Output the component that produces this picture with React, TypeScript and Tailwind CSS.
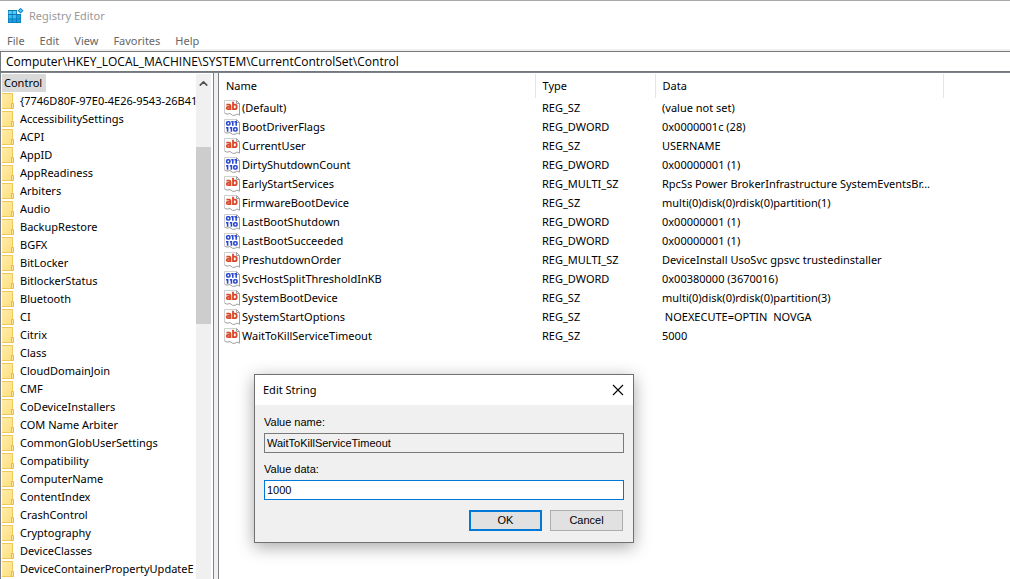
import { ChevronUp } from "lucide-react";

const menuItems = ["File", "Edit", "View", "Favorites", "Help"];

const keys = [
  "{7746D80F-97E0-4E26-9543-26B41",
  "AccessibilitySettings",
  "ACPI",
  "AppID",
  "AppReadiness",
  "Arbiters",
  "Audio",
  "BackupRestore",
  "BGFX",
  "BitLocker",
  "BitlockerStatus",
  "Bluetooth",
  "CI",
  "Citrix",
  "Class",
  "CloudDomainJoin",
  "CMF",
  "CoDeviceInstallers",
  "COM Name Arbiter",
  "CommonGlobUserSettings",
  "Compatibility",
  "ComputerName",
  "ContentIndex",
  "CrashControl",
  "Cryptography",
  "DeviceClasses",
  "DeviceContainerPropertyUpdateE",
];

const values = [
  { name: "(Default)", type: "REG_SZ", data: "(value not set)" },
  { name: "BootDriverFlags", type: "REG_DWORD", data: "0x0000001c (28)" },
  { name: "CurrentUser", type: "REG_SZ", data: "USERNAME" },
  { name: "DirtyShutdownCount", type: "REG_DWORD", data: "0x00000001 (1)" },
  { name: "EarlyStartServices", type: "REG_MULTI_SZ", data: "RpcSs Power BrokerInfrastructure SystemEventsBr..." },
  { name: "FirmwareBootDevice", type: "REG_SZ", data: "multi(0)disk(0)rdisk(0)partition(1)" },
  { name: "LastBootShutdown", type: "REG_DWORD", data: "0x00000001 (1)" },
  { name: "LastBootSucceeded", type: "REG_DWORD", data: "0x00000001 (1)" },
  { name: "PreshutdownOrder", type: "REG_MULTI_SZ", data: "DeviceInstall UsoSvc gpsvc trustedinstaller" },
  { name: "SvcHostSplitThresholdInKB", type: "REG_DWORD", data: "0x00380000 (3670016)" },
  { name: "SystemBootDevice", type: "REG_SZ", data: "multi(0)disk(0)rdisk(0)partition(3)" },
  { name: "SystemStartOptions", type: "REG_SZ", data: " NOEXECUTE=OPTIN  NOVGA" },
  { name: "WaitToKillServiceTimeout", type: "REG_SZ", data: "5000" },
];

const RegistryIcon = () => (
  <svg width="16" height="16" viewBox="0 0 16 16" aria-hidden="true">
    <path d="M0 2h9v4h4v9H0z" fill="#0878b8" />
    <path d="M.6 3h3.2v3H.6zM4.6 3h3.6v3H4.6z" fill="#55cdf8" />
    <path d="M.6 7h3.2v3.4H.6zM4.6 7h3.6v3.4H4.6z" fill="#3dbcf0" />
    <path d="M9 7h3.4v3.4H9zM.6 11.3h3.2v3H.6zM4.6 11.3h3.6v3H4.6zM9 11.3h3.4v3H9z" fill="#1d9fdc" />
    <path d="M12.5 -.2L15.5 2.7L12.5 5.6L9.6 2.7z" fill="#1481bd" />
    <path d="M12.5 1.1L14.1 2.7L12.5 4.3L10.9 2.7z" fill="#55cdf8" />
  </svg>
);

const FolderIcon = () => (
  <svg width="12" height="16" viewBox="0 0 12 16" className="shrink-0" aria-hidden="true">
    <defs>
      <linearGradient id="folder" x1="0" y1="0" x2="1" y2="1">
        <stop offset="0" stopColor="#ffecab" />
        <stop offset="1" stopColor="#fddf7c" />
      </linearGradient>
    </defs>
    <path d="M0 0H11V16H0z" fill="url(#folder)" />
    <path d="M0 .5H10.5V11M0 15.5H9.5" fill="none" stroke="#eec95a" />
    <path d="M9.5 10.5h2v5h-2z" fill="#ffe694" stroke="#e6bc45" />
  </svg>
);

const ValueIcon = ({ binary }: { binary: boolean }) => (
  <svg width="16" height="16" viewBox="0 0 16 16" className="shrink-0" aria-hidden="true">
    <path d="M.5 .5H12.5L15.5 3.5V15L13 14L11 15.3L8.5 15.5L6 13.5L3 14L.5 13z" fill="#fff" />
    <path d="M.5 13V.5H12" fill="none" stroke="#cfcfcf" />
    <path d="M12.5 .5V3.5H15.5L12.5 .5M15.5 3.5V15.2L13 14L11 15.3H8.5L6 13.5L3 14.2L.5 13" fill="none" stroke="#a0a0a0" />
    {binary ? (
      <g fill="none" stroke="#2948d0" strokeWidth="1.6">
        <rect x="2.7" y="2.8" width="3.2" height="3.2" rx="1" />
        <path d="M7.2 2.8H8.8V6.8M10.4 2.8H12.2V6.8" />
        <path d="M2 8.8H3.6V12.8M5.8 8.8H7.4V12.8" />
        <rect x="9.8" y="8.8" width="3.2" height="3.2" rx="1" />
      </g>
    ) : (
      <g fill="none" stroke="#d9482b" strokeWidth="1.8">
        <path d="M2.4 4.6H5.2Q6.4 4.6 6.4 5.7V10.1M6.4 6.8H4Q2.7 6.8 2.7 8T4 9.2H6.4" />
        <path d="M9 1.8V10.1M9 4.7H11.1Q12.7 4.7 12.7 6.9T11.1 9.2H9" />
      </g>
    )}
  </svg>
);

const KeyTree = () => (
  <nav aria-label="Keys" className="flex w-[214px] shrink-0 overflow-hidden border-x border-[#7c8288] bg-white pr-[2px] pl-px">
    <div className="min-w-0 flex-1 overflow-hidden pt-px">
      <button className="block h-[18px] bg-[#d9d9d9] pr-1 pl-[2px] leading-[18px]">Control</button>
      <ul>
        {keys.map((key) => (
          <li key={key}>
            <button className="flex h-[18px] items-center gap-[6px] leading-[18px] whitespace-nowrap">
              <FolderIcon />
              {key}
            </button>
          </li>
        ))}
      </ul>
    </div>
    <div className="mt-px flex w-[15px] shrink-0 flex-col bg-[#f0f0f0]">
      <button aria-label="Scroll up" className="flex h-[18px] items-center justify-center text-[#505050]">
        <ChevronUp size={13} strokeWidth={3} />
      </button>
      <div className="mt-[55px] h-[177px] bg-[#cdcdcd]" />
    </div>
  </nav>
);

const ValueList = () => (
  <main className="min-w-0 flex-1 overflow-hidden border-l border-[#7c8288] bg-white pt-px">
    <table className="w-full table-fixed border-collapse text-left">
      <colgroup>
        <col className="w-[316px]" />
        <col className="w-[120px]" />
        <col className="w-[288px]" />
        <col />
      </colgroup>
      <thead>
        <tr className="h-[24px]">
          <th className="border-r border-[#e5e5e5] p-0 pl-[7px] font-normal">Name</th>
          <th className="border-r border-[#e5e5e5] p-0 pl-[7px] font-normal">Type</th>
          <th className="border-r border-[#e5e5e5] p-0 pl-[7px] font-normal">Data</th>
          <td />
        </tr>
      </thead>
      <tbody>
        {values.map((value) => (
          <tr key={value.name} className="h-[19px] leading-[19px] whitespace-pre">
            <td className="p-0 pl-[5px]">
              <div className="flex items-center gap-[2px]">
                <ValueIcon binary={value.type === "REG_DWORD"} />
                {value.name}
              </div>
            </td>
            <td className="p-0 pl-[7px]">{value.type}</td>
            <td className="p-0 pl-[7px]">{value.data}</td>
            <td />
          </tr>
        ))}
      </tbody>
    </table>
  </main>
);

const EditDialog = () => (
  <div
    role="dialog"
    aria-labelledby="dialog-title"
    className="absolute top-[373px] left-[254px] w-[380px] border border-[#707070] bg-[#f0f0f0] shadow-[0_4px_16px_rgba(0,0,0,0.35)]"
  >
    <header className="flex h-[30px] items-center justify-between bg-white pr-[9px] pl-2">
      <h2 id="dialog-title">Edit String</h2>
      <button aria-label="Close">
        <svg width="12" height="12" viewBox="0 0 12 12" stroke="#000" strokeWidth="1.1">
          <path d="M1 1L11 11M11 1L1 11" />
        </svg>
      </button>
    </header>
    <form
      className="px-[9px] pt-[9px] pb-[11px] font-['Liberation_Sans',Arial,sans-serif] text-[11px]"
      onSubmit={(e) => e.preventDefault()}
    >
      <label htmlFor="value-name" className="block h-[19px] leading-4">Value name:</label>
      <input
        id="value-name"
        readOnly
        defaultValue="WaitToKillServiceTimeout"
        className="block h-[20px] w-full border border-[#7a7a7a] bg-[#f0f0f0] px-[2px] outline-none"
      />
      <label htmlFor="value-data" className="mt-2 block h-[19px] leading-4">Value data:</label>
      <input
        id="value-data"
        defaultValue="1000"
        className="block h-[20px] w-full border border-[#0078d7] bg-white px-[2px] outline-none"
      />
      <div className="mt-[10px] flex justify-end gap-2 pr-px">
        <button type="submit" className="h-[21px] w-[73px] border-2 border-[#0078d7] bg-[#e1e1e1]">OK</button>
        <button type="button" className="h-[21px] w-[73px] border border-[#adadad] bg-[#e1e1e1]">Cancel</button>
      </div>
    </form>
  </div>
);

export default function App() {
  return (
    <div className="relative flex h-screen flex-col overflow-hidden border-t border-[#a9a9a9] bg-white font-['Noto_Sans','Open_Sans',sans-serif] text-[11px] text-black">
      <header className="flex h-[30px] shrink-0 items-center gap-[5px] pl-2 text-[#999999]">
        <RegistryIcon />
        <h1>Registry Editor</h1>
      </header>
      <nav aria-label="Menu" className="flex h-[20px] shrink-0 items-center gap-[15px] border-b-2 border-[#f0f0f0] pt-[2px] pl-[7px] text-[#666666]">
        {menuItems.map((item) => (
          <button key={item}>{item}</button>
        ))}
      </nav>
      <input
        aria-label="Address"
        defaultValue="Computer\HKEY_LOCAL_MACHINE\SYSTEM\CurrentControlSet\Control"
        className="block h-[21px] w-full shrink-0 border border-r-0 border-[#74777b] px-[5px] font-['Open_Sans',sans-serif] text-[12px] outline-none"
      />
      <div className="flex min-h-0 flex-1 gap-[4px] border-t border-[#7c8288] bg-[#f0f0f0]">
        <KeyTree />
        <ValueList />
      </div>
      <EditDialog />
    </div>
  );
}
